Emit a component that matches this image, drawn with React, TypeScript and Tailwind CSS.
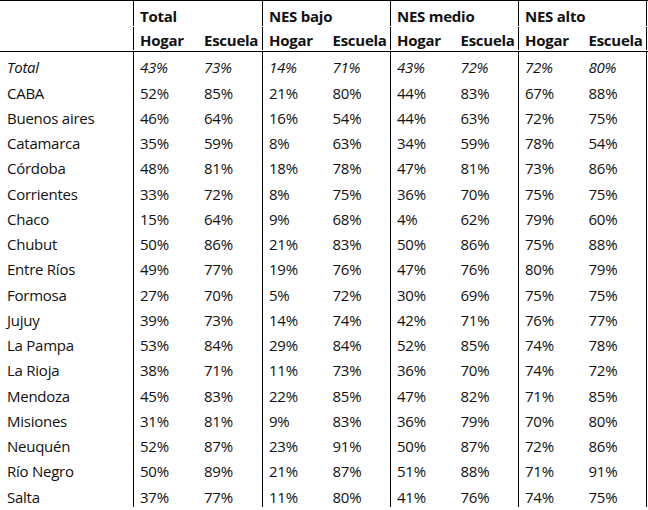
const rows: [string, string[]][] = [
  ["CABA", ["52%", "85%", "21%", "80%", "44%", "83%", "67%", "88%"]],
  ["Buenos aires", ["46%", "64%", "16%", "54%", "44%", "63%", "72%", "75%"]],
  ["Catamarca", ["35%", "59%", "8%", "63%", "34%", "59%", "78%", "54%"]],
  ["Córdoba", ["48%", "81%", "18%", "78%", "47%", "81%", "73%", "86%"]],
  ["Corrientes", ["33%", "72%", "8%", "75%", "36%", "70%", "75%", "75%"]],
  ["Chaco", ["15%", "64%", "9%", "68%", "4%", "62%", "79%", "60%"]],
  ["Chubut", ["50%", "86%", "21%", "83%", "50%", "86%", "75%", "88%"]],
  ["Entre Ríos", ["49%", "77%", "19%", "76%", "47%", "76%", "80%", "79%"]],
  ["Formosa", ["27%", "70%", "5%", "72%", "30%", "69%", "75%", "75%"]],
  ["Jujuy", ["39%", "73%", "14%", "74%", "42%", "71%", "76%", "77%"]],
  ["La Pampa", ["53%", "84%", "29%", "84%", "52%", "85%", "74%", "78%"]],
  ["La Rioja", ["38%", "71%", "11%", "73%", "36%", "70%", "74%", "72%"]],
  ["Mendoza", ["45%", "83%", "22%", "85%", "47%", "82%", "71%", "85%"]],
  ["Misiones", ["31%", "81%", "9%", "83%", "36%", "79%", "70%", "80%"]],
  ["Neuquén", ["52%", "87%", "23%", "91%", "50%", "87%", "72%", "86%"]],
  ["Río Negro", ["50%", "89%", "21%", "87%", "51%", "88%", "71%", "91%"]],
  ["Salta", ["37%", "77%", "11%", "80%", "41%", "76%", "74%", "75%"]],
];

const groups = ["Total", "NES bajo", "NES medio", "NES alto"];
const groupW = ["w-[129px]", "w-[128px]", "w-[128px]", "w-[129px]"];

function Cell({ text, italic, bold }: { text: string; italic?: boolean; bold?: boolean }) {
  return (
    <div className={`w-[64px] pl-[6px] whitespace-nowrap ${italic ? "italic" : ""} ${bold ? "font-bold" : ""}`}>
      {text}
    </div>
  );
}

function Row({ label, values, italic }: { label: string; values: string[]; italic?: boolean }) {
  return (
    <div className="flex h-[25.25px] items-end">
      <div className={`w-[133px] pl-[7px] ${italic ? "italic" : ""}`}>{label}</div>
      {groups.map((g, i) => (
        <div key={g} className={`flex h-full items-end border-l border-black ${groupW[i]} ${i === 3 ? "border-r" : ""}`}>
          <Cell text={values[i * 2]} italic={italic} />
          <Cell text={values[i * 2 + 1]} italic={italic} />
        </div>
      ))}
    </div>
  );
}

export default function App() {
  return (
    <div
      className="bg-white text-[15px] leading-[20px] tracking-[-0.25px] text-[#111] w-[648px]"
      style={{ fontFamily: '"Open Sans", "Noto Sans", sans-serif' }}
    >
      <div className="border-t border-black">
        <div className="flex h-[25.5px] items-end pb-[1px]">
          <div className="w-[133px]" />
          {groups.map((g, i) => (
            <div key={g} className={`h-full flex items-end border-l border-black pl-[6px] font-bold ${groupW[i]} ${i === 3 ? "border-r" : ""}`}>
              {g}
            </div>
          ))}
        </div>
        <div className="flex h-[25.5px] items-end pb-[1px] border-b border-black">
          <div className="w-[133px]" />
          {groups.map((g, i) => (
            <div key={g} className={`h-full flex items-end border-l border-black ${groupW[i]} ${i === 3 ? "border-r" : ""}`}>
              <Cell text="Hogar" bold />
              <Cell text="Escuela" bold />
            </div>
          ))}
        </div>
        <Row label="Total" values={["43%", "73%", "14%", "71%", "43%", "72%", "72%", "80%"]} italic />
        {rows.map(([l, v]) => (
          <Row key={l} label={l} values={v} />
        ))}
      </div>
    </div>
  );
}
